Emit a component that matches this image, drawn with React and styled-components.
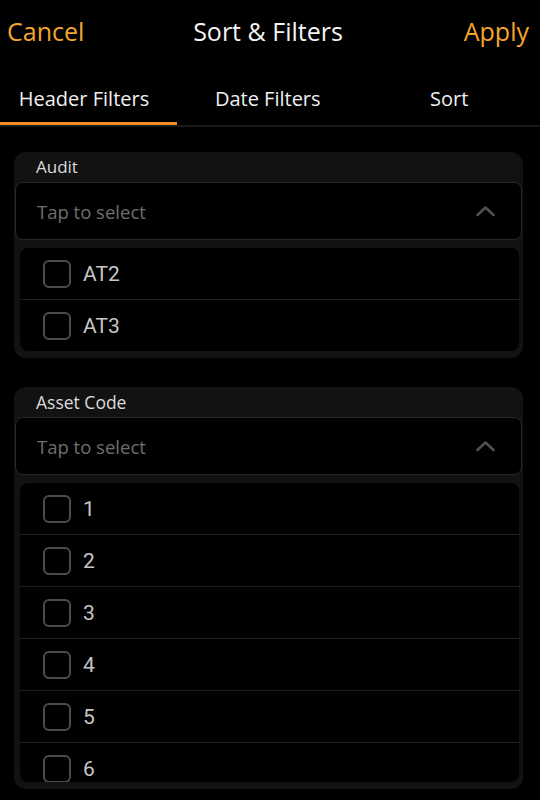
import React from "react";
import styled, { createGlobalStyle } from "styled-components";

const Global = createGlobalStyle`
  html, body { margin: 0; padding: 0; background: #000; }
  body { font-family: "Open Sans", "Noto Sans", sans-serif; }
  * { box-sizing: border-box; }
`;

const Screen = styled.div`
  width: 540px;
  height: 800px;
  background: #000;
  overflow: hidden;
  display: flex;
  flex-direction: column;
`;

const TopBar = styled.div`
  height: 62px;
  display: grid;
  grid-template-columns: 1fr auto 1fr;
  align-items: center;
  padding: 0 11px 0 7px;
  font-size: 25px;
`;

const BarAction = styled.span`
  color: #f5a52e;
  justify-self: ${(p) => (p.$end ? "end" : "start")};
`;

const BarTitle = styled.span`
  color: #f4f4f4;
`;

const Tabs = styled.div`
  display: grid;
  grid-template-columns: 177px 1fr 1fr;
  border-bottom: 2px solid #1a1a1a;
`;

const Tab = styled.div`
  height: 63px;
  display: flex;
  align-items: flex-end;
  justify-content: center;
  padding-bottom: 12px;
  padding-right: ${(p) => (p.$first ? "9px" : "0")};
  font-size: 20px;
  line-height: 28px;
  color: #f0f0f0;
  box-shadow: ${(p) => (p.$active ? "inset 0 -3px 0 #f08c25" : "none")};
`;

const Content = styled.div`
  padding: 25px 17px 0 14px;
  display: flex;
  flex-direction: column;
  gap: 29px;
`;

const Card = styled.div`
  background: #121212;
  border-radius: 12px;
  padding: 0 0 7px;
`;

const CardLabel = styled.div`
  height: 30px;
  line-height: 30px;
  padding-left: 22px;
  font-size: ${(p) => p.$size || 17}px;
  color: #dadada;
`;

const Select = styled.div`
  margin: 0 1px;
  height: 58px;
  border: 1px solid #272727;
  border-radius: 8px;
  background: #000;
  display: flex;
  align-items: center;
  justify-content: space-between;
  padding: 0 26px 0 21px;
`;

const Placeholder = styled.span`
  font-size: 18.5px;
  color: #6e6e6e;
`;

const OptionList = styled.div`
  margin: 8px 4px 0 6px;
  background: #000;
  border-radius: 8px;
  overflow: hidden;
  max-height: ${(p) => (p.$max ? `${p.$max}px` : "none")};
`;

const OptionRow = styled.div`
  height: 52px;
  flex-shrink: 0;
  display: flex;
  align-items: center;
  gap: 12px;
  padding-left: 23px;
  border-bottom: 1px solid #1f1f1f;
  &:last-child {
    border-bottom: none;
    height: 51px;
  }
`;

const Box = styled.span`
  width: 28px;
  height: 28px;
  border: 2.5px solid #4c4c4c;
  border-radius: 6px;
  flex-shrink: 0;
`;

const OptionText = styled.span`
  font-family: Roboto, "Liberation Sans", sans-serif;
  font-size: 21px;
  color: #c6c6c6;
`;

const Chevron = () => (
  <svg width="19" height="12" viewBox="0 0 19 12" fill="none">
    <path
      d="M1.5 10 L9.5 2.5 L17.5 10"
      stroke="#505050"
      strokeWidth="2.6"
      strokeLinecap="round"
      strokeLinejoin="round"
    />
  </svg>
);

const FilterCard = ({ label, options, max, labelSize }) => (
  <Card>
    <CardLabel $size={labelSize}>{label}</CardLabel>
    <Select>
      <Placeholder>Tap to select</Placeholder>
      <Chevron />
    </Select>
    <OptionList $max={max}>
      {options.map((o) => (
        <OptionRow key={o}>
          <Box />
          <OptionText>{o}</OptionText>
        </OptionRow>
      ))}
    </OptionList>
  </Card>
);

export default function App() {
  return (
    <Screen>
      <Global />
      <TopBar>
        <BarAction>Cancel</BarAction>
        <BarTitle>Sort &amp; Filters</BarTitle>
        <BarAction $end>Apply</BarAction>
      </TopBar>
      <Tabs>
        <Tab $active $first>Header Filters</Tab>
        <Tab>Date Filters</Tab>
        <Tab>Sort</Tab>
      </Tabs>
      <Content>
        <FilterCard label="Audit" options={["AT2", "AT3"]} />
        <FilterCard
          label="Asset Code"
          labelSize={17.5}
          options={["1", "2", "3", "4", "5", "6"]}
          max={299}
        />
      </Content>
    </Screen>
  );
}
